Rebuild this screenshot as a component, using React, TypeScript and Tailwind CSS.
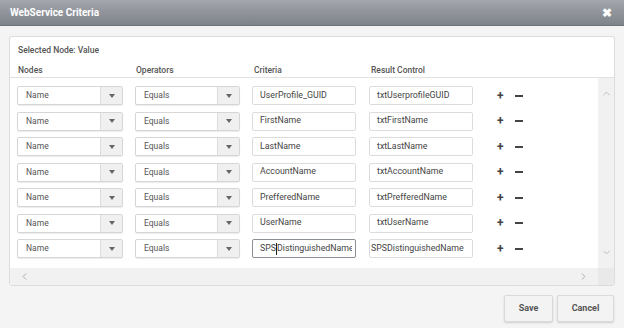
import { ChevronUp, ChevronDown, ChevronLeft, ChevronRight } from "lucide-react";

type Row = { criteria: string; result: string; focused?: boolean; scrolled?: boolean };

const rows: Row[] = [
  { criteria: "UserProfile_GUID", result: "txtUserprofileGUID" },
  { criteria: "FirstName", result: "txtFirstName" },
  { criteria: "LastName", result: "txtLastName" },
  { criteria: "AccountName", result: "txtAccountName" },
  { criteria: "PrefferedName", result: "txtPrefferedName" },
  { criteria: "UserName", result: "txtUserName" },
  { criteria: "SPSDistinguishedName", result: "SPSDistinguishedName", focused: true, scrolled: true },
];

function SelectBox({ label, width }: { label: string; width: string }) {
  return (
    <div className={`${width} h-[19px] flex border border-[#d6d6d6] rounded-[2px] bg-white shadow-[0_1px_1px_rgba(0,0,0,0.08)]`}>
      <div className="flex-1 flex items-center pl-[8px] text-[8.5px] text-[#555]">{label}</div>
      <div className="w-[22px] flex items-center justify-center bg-[#f0f0f0] border-l border-[#dcdcdc]">
        <div className="w-0 h-0 border-l-[3.5px] border-r-[3.5px] border-t-[4px] border-l-transparent border-r-transparent border-t-[#666]" />
      </div>
    </div>
  );
}

function TextBox({ value, focused, scrolled }: { value: string; focused?: boolean; scrolled?: boolean }) {
  return (
    <div
      className={`w-[104px] h-[19px] flex items-center rounded-[2px] bg-white text-[8.8px] text-[#444] overflow-hidden whitespace-nowrap ${
        focused ? "border border-[#8a8f96] pl-[7px]" : scrolled ? "border border-[#dcdcdc] pl-[1px]" : "border border-[#dcdcdc] pl-[7px]"
      }`}
    >
      {focused ? (
        <div className="w-[92px] overflow-hidden flex items-center">
          SPS<span className="inline-block w-[1px] h-[12px] bg-[#222] shrink-0" />DistinguishedName
        </div>
      ) : (
        value
      )}
    </div>
  );
}

export default function App() {
  return (
    <div className="w-[624px] h-[328px] bg-[#f4f4f4] flex flex-col" style={{ fontFamily: "Roboto, 'Liberation Sans', sans-serif" }}>
      {/* Title bar */}
      <div className="h-[26px] flex items-center justify-between px-[10px] bg-gradient-to-b from-[#a3a7ad] to-[#7e8289] border-b border-[#6f737a]">
        <span className="text-[10px] font-bold text-white">WebService Criteria</span>
        <span className="text-[12px] font-bold text-white leading-none mr-[2px]">✖</span>
      </div>

      {/* Panel */}
      <div className="mt-[10px] mx-[9px] h-[250px] bg-white border border-[#dcdcdc] rounded-[3px] flex flex-col overflow-hidden">
        <div className="px-[8px] pt-[7px] h-[41px] border-b border-[#e2e2e2]">
          <div className="text-[8.5px] font-medium text-[#555]">Selected Node: Value</div>
          <div className="flex mt-[7px] text-[8.5px] font-medium text-[#555]">
            <span className="w-[118px]">Nodes</span>
            <span className="w-[118px]">Operators</span>
            <span className="w-[117px]">Criteria</span>
            <span>Result Control</span>
          </div>
        </div>

        <div className="flex-1 flex">
          <div className="flex-1 flex flex-col gap-[6.5px] pl-[7px] pt-[8px]">
            {rows.map((r, i) => (
              <div key={i} className="flex items-center">
                <SelectBox label="Name" width="w-[106px]" />
                <div className="w-[12px]" />
                <SelectBox label="Equals" width="w-[105px]" />
                <div className="w-[12px]" />
                <TextBox value={r.criteria} focused={r.focused} />
                <div className="w-[13px]" />
                <TextBox value={r.result} scrolled={r.scrolled} />
                <div className="ml-[24px] flex items-center gap-[11px] text-[#444]">
                  <span className="text-[12px] font-bold leading-none">+</span>
                  <span className="w-[8px] h-[2px] bg-[#444]" />
                </div>
              </div>
            ))}
          </div>
          <div className="w-[16px] bg-[#f1f1f1] flex flex-col items-center justify-between py-[10px]">
            <ChevronUp size={11} className="text-[#b8b8b8]" strokeWidth={2} />
            <ChevronDown size={11} className="text-[#b8b8b8]" strokeWidth={2} />
          </div>
        </div>

        <div className="h-[17px] flex">
          <div className="flex-1 bg-[#f1f1f1] flex items-center justify-between px-[9px]">
            <ChevronLeft size={11} className="text-[#a8a8a8]" strokeWidth={2} />
            <ChevronRight size={11} className="text-[#a8a8a8]" strokeWidth={2} />
          </div>
          <div className="w-[16px] bg-[#e9e9e9]" />
        </div>
      </div>

      {/* Footer buttons */}
      <div className="flex justify-end gap-[4px] pr-[10px] mt-[9px]">
        <button className="w-[49px] h-[27px] bg-[#f3f3f3] border border-[#dadada] rounded-[2px] shadow-[0_1px_2px_rgba(0,0,0,0.15)] text-[9px] font-bold text-[#555]">
          Save
        </button>
        <button className="w-[57px] h-[27px] bg-[#f3f3f3] border border-[#dadada] rounded-[2px] shadow-[0_1px_2px_rgba(0,0,0,0.15)] text-[9px] font-bold text-[#555]">
          Cancel
        </button>
      </div>
    </div>
  );
}
